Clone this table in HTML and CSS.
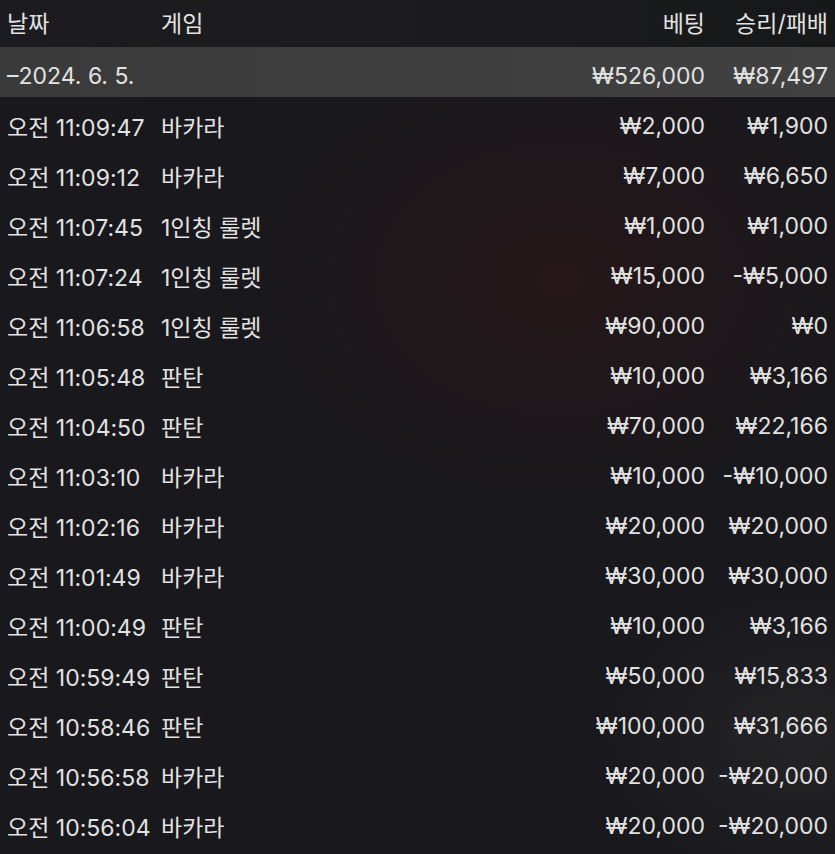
FILE: index.html
```html
<!DOCTYPE html>
<html lang="ko">
<head>
<meta charset="utf-8">
<link rel="stylesheet" href="styles.css">
</head>
<body>
<div class="table">
  <div class="row head">
    <div class="c-date">날짜</div><div class="c-game">게임</div><div class="c-bet">베팅</div><div class="c-win">승리/패배</div>
  </div>
  <div class="row summary">
    <div class="c-date">–2024. 6. 5.</div><div class="c-game"></div><div class="c-bet">₩526,000</div><div class="c-win">₩87,497</div>
  </div>
  <div class="row"><div class="c-date">오전 11:09:47</div><div class="c-game">바카라</div><div class="c-bet">₩2,000</div><div class="c-win">₩1,900</div></div>
  <div class="row"><div class="c-date">오전 11:09:12</div><div class="c-game">바카라</div><div class="c-bet">₩7,000</div><div class="c-win">₩6,650</div></div>
  <div class="row"><div class="c-date">오전 11:07:45</div><div class="c-game">1인칭 룰렛</div><div class="c-bet">₩1,000</div><div class="c-win">₩1,000</div></div>
  <div class="row"><div class="c-date">오전 11:07:24</div><div class="c-game">1인칭 룰렛</div><div class="c-bet">₩15,000</div><div class="c-win">-₩5,000</div></div>
  <div class="row"><div class="c-date">오전 11:06:58</div><div class="c-game">1인칭 룰렛</div><div class="c-bet">₩90,000</div><div class="c-win">₩0</div></div>
  <div class="row"><div class="c-date">오전 11:05:48</div><div class="c-game">판탄</div><div class="c-bet">₩10,000</div><div class="c-win">₩3,166</div></div>
  <div class="row"><div class="c-date">오전 11:04:50</div><div class="c-game">판탄</div><div class="c-bet">₩70,000</div><div class="c-win">₩22,166</div></div>
  <div class="row"><div class="c-date">오전 11:03:10</div><div class="c-game">바카라</div><div class="c-bet">₩10,000</div><div class="c-win">-₩10,000</div></div>
  <div class="row"><div class="c-date">오전 11:02:16</div><div class="c-game">바카라</div><div class="c-bet">₩20,000</div><div class="c-win">₩20,000</div></div>
  <div class="row"><div class="c-date">오전 11:01:49</div><div class="c-game">바카라</div><div class="c-bet">₩30,000</div><div class="c-win">₩30,000</div></div>
  <div class="row"><div class="c-date">오전 11:00:49</div><div class="c-game">판탄</div><div class="c-bet">₩10,000</div><div class="c-win">₩3,166</div></div>
  <div class="row"><div class="c-date">오전 10:59:49</div><div class="c-game">판탄</div><div class="c-bet">₩50,000</div><div class="c-win">₩15,833</div></div>
  <div class="row"><div class="c-date">오전 10:58:46</div><div class="c-game">판탄</div><div class="c-bet">₩100,000</div><div class="c-win">₩31,666</div></div>
  <div class="row"><div class="c-date">오전 10:56:58</div><div class="c-game">바카라</div><div class="c-bet">₩20,000</div><div class="c-win">-₩20,000</div></div>
  <div class="row"><div class="c-date">오전 10:56:04</div><div class="c-game">바카라</div><div class="c-bet">₩20,000</div><div class="c-win">-₩20,000</div></div>
</div>
</body>
</html>
```

FILE: styles.css
```css
html, body {
  margin: 0;
  padding: 0;
  height: 100%;
}
body {
  background:
    radial-gradient(ellipse 300px 220px at 560px 280px, rgba(60, 20, 20, 0.35), transparent),
    radial-gradient(ellipse 200px 150px at 800px 740px, rgba(70, 70, 70, 0.25), transparent),
    #19181c;
  color: #e2e2e2;
  font-family: Inter, "Noto Sans CJK KR", sans-serif;
  font-size: 23px;
  overflow: hidden;
}
.table {
  display: flex;
  flex-direction: column;
}
.row {
  display: grid;
  grid-template-columns: 154px 1fr 150px 123px;
  align-items: center;
  height: 50px;
  padding: 7px 7px 0;
  box-sizing: border-box;
  white-space: nowrap;
}
.row.head {
  height: 47px;
  padding: 0 7px 3px;
  background: linear-gradient(90deg, #1c1c20, #1b1b1d 60%, #17181a);
}
.row.summary {
  background: linear-gradient(90deg, #3a3a3a, #3f3f3f 70%, #414141);
}
.c-bet, .c-win {
  text-align: right;
}
```
